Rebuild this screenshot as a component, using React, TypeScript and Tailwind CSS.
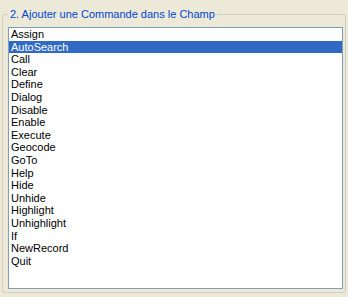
const commands = [
  "Assign",
  "AutoSearch",
  "Call",
  "Clear",
  "Define",
  "Dialog",
  "Disable",
  "Enable",
  "Execute",
  "Geocode",
  "GoTo",
  "Help",
  "Hide",
  "Unhide",
  "Highlight",
  "Unhighlight",
  "If",
  "NewRecord",
  "Quit",
];

export default function App() {
  const selected = "AutoSearch";

  return (
    <div className="h-[297px] w-[348px] bg-[#ECE9D8] px-[2px] pt-[8px] font-['Liberation_Sans',sans-serif] text-[11px]">
      <fieldset className="h-[285px] rounded-[3px] border border-[#D0D0BF] pb-[3px] pl-[5px] pr-[2px]">
        <legend className="px-[2px] leading-[13px] text-[#0046D5]">
          2. Ajouter une Commande dans le Champ
        </legend>
        <ul className="mt-[6px] h-[262px] border border-[#7F9DB9] bg-white">
          {commands.map((c) => (
            <li
              key={c}
              className={
                c === selected
                  ? "h-[12.6px] bg-[#316AC5] pl-[2px] leading-[12.6px] text-white"
                  : "h-[12.6px] pl-[2px] leading-[12.6px] text-black"
              }
            >
              {c}
            </li>
          ))}
        </ul>
      </fieldset>
    </div>
  );
}
